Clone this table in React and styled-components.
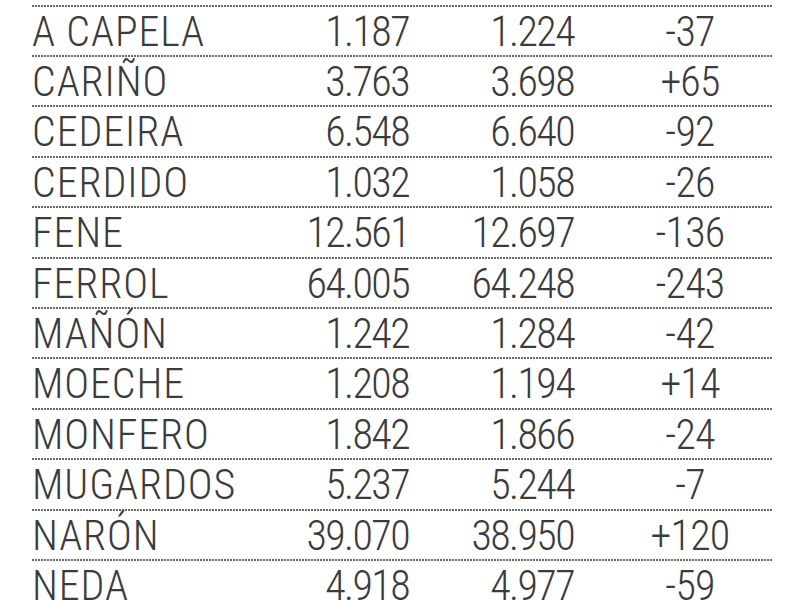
import styled, { createGlobalStyle } from 'styled-components';

const Global = createGlobalStyle`
  html, body { margin: 0; background: #fff; overflow: hidden; }
`;

const Table = styled.div`
  width: 740px;
  padding: 4.6px 0 0 32px;
  font-family: "Roboto Condensed", Roboto, sans-serif;
  font-weight: 300;
  font-size: 42px;
  color: #3b3b3b;
`;

const Row = styled.div`
  display: grid;
  grid-template-columns: 268px 110px 165px 197px;
  box-sizing: border-box;
  height: 50.4px;
  padding-top: 6px;
  line-height: 1;
  background-image: repeating-linear-gradient(
    to right,
    #6a6a6a 0 2px,
    transparent 2px 3px
  );
  background-size: 100% 2px;
  background-repeat: no-repeat;
  background-position: top left;
  white-space: nowrap;
`;

const Name = styled.span`
  text-align: left;
  letter-spacing: 0.9px;
`;

const Num = styled.span`
  text-align: right;
  letter-spacing: -1.6px;
  padding-right: 1px;
`;

const Diff = styled.span`
  text-align: center;
  padding-left: 33px;
  letter-spacing: -0.8px;
`;

const rows = [
  ['A CAPELA', '1.187', '1.224', '-37'],
  ['CARIÑO', '3.763', '3.698', '+65'],
  ['CEDEIRA', '6.548', '6.640', '-92'],
  ['CERDIDO', '1.032', '1.058', '-26'],
  ['FENE', '12.561', '12.697', '-136'],
  ['FERROL', '64.005', '64.248', '-243'],
  ['MAÑÓN', '1.242', '1.284', '-42'],
  ['MOECHE', '1.208', '1.194', '+14'],
  ['MONFERO', '1.842', '1.866', '-24'],
  ['MUGARDOS', '5.237', '5.244', '-7'],
  ['NARÓN', '39.070', '38.950', '+120'],
  ['NEDA', '4.918', '4.977', '-59'],
];

export default function App() {
  return (
    <>
      <Global />
      <Table>
        {rows.map(([name, a, b, d]) => (
          <Row key={name}>
            <Name>{name}</Name>
            <Num>{a}</Num>
            <Num>{b}</Num>
            <Diff>{d}</Diff>
          </Row>
        ))}
      </Table>
    </>
  );
}
